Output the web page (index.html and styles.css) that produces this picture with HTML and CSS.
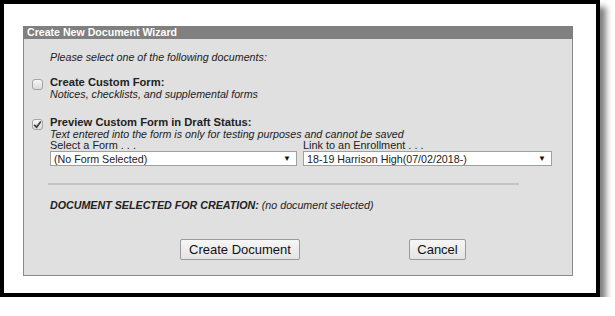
FILE: index.html
```html
<!DOCTYPE html>
<html>
<head>
<meta charset="utf-8">
<link rel="stylesheet" href="styles.css">
</head>
<body>
<div class="frame">
  <div class="panel">
    <div class="title">Create New Document Wizard</div>
    <div class="content">
      <div class="intro">Please select one of the following documents:</div>
      <div class="option opt1">
        <span class="cb"></span>
        <div class="opt-text">
          <div class="opt-title">Create Custom Form:</div>
          <div class="opt-desc">Notices, checklists, and supplemental forms</div>
        </div>
      </div>
      <div class="option opt2">
        <span class="cb checked"><svg width="9" height="9" viewBox="0 0 9 9"><path d="M1.2 4.8 L3.6 7.2 L7.8 1.6" fill="none" stroke="#3a3a3a" stroke-width="1.7"/></svg></span>
        <div class="opt-text">
          <div class="opt-title">Preview Custom Form in Draft Status:</div>
          <div class="opt-desc">Text entered into the form is only for testing purposes and cannot be saved</div>
          <div class="selects">
            <div class="field">
              <div class="field-label">Select a Form . . .</div>
              <div class="select sel-form"><span>(No Form Selected)</span><span class="arrow">▼</span></div>
            </div>
            <div class="field">
              <div class="field-label">Link to an Enrollment . . .</div>
              <div class="select sel-enr"><span>18-19 Harrison High(07/02/2018-)</span><span class="arrow">▼</span></div>
            </div>
          </div>
        </div>
      </div>
      <div class="sep"></div>
      <div class="selected"><b>DOCUMENT SELECTED FOR CREATION:</b> (no document selected)</div>
      <div class="buttons">
        <button class="btn btn-create">Create Document</button>
        <button class="btn btn-cancel">Cancel</button>
      </div>
    </div>
  </div>
</div>
</body>
</html>
```

FILE: styles.css
```css
* { box-sizing: border-box; }
html, body { margin: 0; padding: 0; background: #fff; }
body { font-family: "Liberation Sans", Arial, sans-serif; color: #222; }

.frame {
  width: 600px;
  height: 297px;
  border: 4px solid #000;
  background: #fff;
  padding: 22px 23px 17px 19px;
  box-shadow: 6px 7px 6px rgba(0,0,0,0.5);
}

.panel {
  height: 250px;
  background: #e0e0e0;
  border: 1px solid #8a8a8a;
  border-top: none;
}

.title {
  height: 13px;
  margin: 0 -1px;
  background: #808080;
  color: #fff;
  font-weight: bold;
  font-size: 10.6px;
  line-height: 13px;
  padding-left: 4px;
}

.content {
  padding: 0 0 0 8px;
}

.intro {
  font-style: italic;
  font-size: 10.7px;
  line-height: 12px;
  margin: 12px 0 0 18px;
}

.option { display: flex; }
.opt1 { margin-top: 13px; }
.opt2 { margin-top: 16px; }

.cb {
  width: 11px;
  height: 11px;
  border: 1px solid #a4a4a4;
  border-radius: 3px;
  background: linear-gradient(#f6f6f6, #dadada);
  margin: 3px 7px 0 0;
  flex: none;
  display: flex;
  align-items: center;
  justify-content: center;
}

.opt-title {
  font-weight: bold;
  font-size: 11.2px;
  line-height: 12px;
}
.opt-desc {
  font-style: italic;
  font-size: 10.7px;
  line-height: 12px;
}

.selects { display: flex; gap: 6px; }
.field-label { font-size: 10.9px; line-height: 11px; }
.select {
  display: flex;
  justify-content: space-between;
  align-items: center;
  background: #fff;
  border: 1px solid #a0a0a0;
  height: 15px;
  font-size: 10.7px;
  padding: 0 5px 0 3px;
}
.sel-form { width: 247px; }
.sel-enr { width: 249px; }
.arrow { font-size: 8px; color: #111; }

.sep {
  height: 2px;
  background: #c4c4c4;
  width: 471px;
  margin: 17px 0 0 16px;
}

.selected {
  font-style: italic;
  font-size: 10.7px;
  line-height: 12px;
  margin: 14px 0 0 18px;
}

.buttons {
  display: flex;
  margin: 28px 0 0 148px;
}
.btn {
  font-family: "Liberation Sans", Arial, sans-serif;
  font-size: 13px;
  height: 21px;
  padding: 0 5px;
  color: #111;
  background: linear-gradient(#f6f6f6, #e4e4e4);
  border: 1px solid #9a9a9a;
  border-radius: 2px;
}
.btn-create { width: 120px; }
.btn-cancel { width: 57px; margin-left: 109px; }
```
